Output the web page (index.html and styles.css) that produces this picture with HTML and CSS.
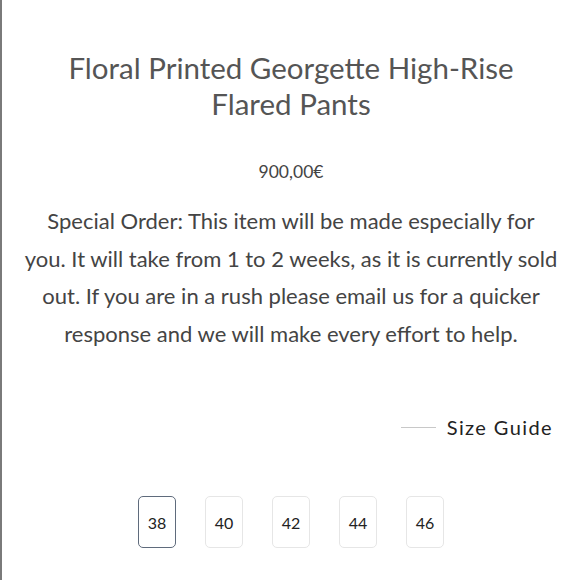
FILE: index.html
```html
<!DOCTYPE html>
<html lang="en">
<head>
<meta charset="utf-8">
<title>Floral Printed Georgette High-Rise Flared Pants</title>
<link rel="stylesheet" href="styles.css">
</head>
<body>
<main class="product">
  <h1 class="title">Floral Printed Georgette High-Rise Flared Pants</h1>
  <p class="price">900,00€</p>
  <p class="desc">Special Order: This item will be made especially for<br>you. It will take from 1 to 2 weeks, as it is currently sold<br>out. If you are in a rush please email us for a quicker<br>response and we will make every effort to help.</p>
  <div class="size-guide"><span class="rule"></span><span class="sg-label">Size Guide</span></div>
  <div class="sizes">
    <button class="size selected">38</button>
    <button class="size">40</button>
    <button class="size">42</button>
    <button class="size">44</button>
    <button class="size">46</button>
  </div>
</main>
</body>
</html>
```
FILE: styles.css
```css
html, body {
  margin: 0;
  padding: 0;
  background: #fff;
}
body {
  border-left: 2px solid #7a7a7a;
  min-height: 100vh;
  box-sizing: border-box;
  font-family: Lato, "Noto Sans", sans-serif;
  color: #444;
}
.product {
  padding: 50px 27px 0 27px;
  text-align: center;
}
.title {
  margin: 0 20px;
  font-size: 29.5px;
  line-height: 36px;
  font-weight: 400;
  color: #555;
}
.price {
  margin: 40px 0 0;
  font-size: 17.5px;
  line-height: 20px;
  color: #444;
}
.desc {
  margin: 20px -8px 0;
  font-size: 22px;
  line-height: 37.5px;
  color: #444;
}
.size-guide {
  display: flex;
  justify-content: flex-end;
  align-items: center;
  gap: 11px;
  margin-top: 63px;
}
.rule {
  width: 35px;
  height: 1px;
  background: #c8c8c8;
}
.sg-label {
  font-size: 20px;
  letter-spacing: 1.4px;
  color: #222;
}
.sizes {
  display: flex;
  justify-content: center;
  gap: 29px;
  margin-top: 57px;
}
.size {
  width: 38px;
  height: 52px;
  padding: 0;
  border: 1px solid #e6e6e6;
  border-radius: 5px;
  background: #fff;
  font-family: Lato, "Noto Sans", sans-serif;
  font-size: 16px;
  color: #222;
}
.size.selected {
  border-color: #5f6b7c;
}
```
